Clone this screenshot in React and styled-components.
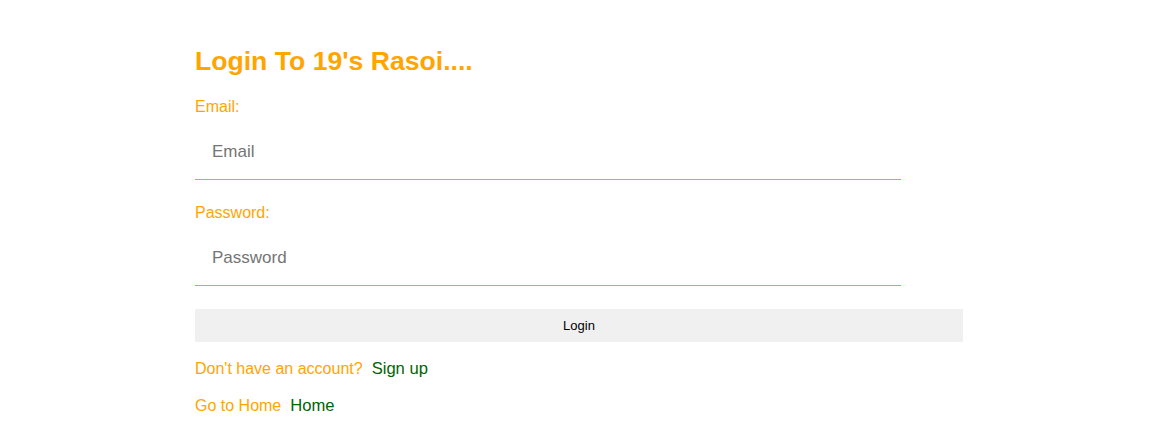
import styled, { createGlobalStyle } from "styled-components";

const GlobalStyle = createGlobalStyle`
  body {
    margin: 0;
    background: #fff;
    font-family: "Liberation Sans", Arial, sans-serif;
  }
`;

const Container = styled.div`
  display: flex;
  flex-direction: column;
  width: 768px;
  padding: 45px 0 0 195px;
`;

const Title = styled.h1`
  margin: 0 0 21px;
  font-size: 26.6px;
  font-weight: 700;
  line-height: 32px;
  color: #ffa500;
`;

const Field = styled.div`
  display: flex;
  flex-direction: column;
  margin-bottom: ${(p) => p.$gap || "24px"};
`;

const Label = styled.label`
  font-size: 16px;
  line-height: 18px;
  color: #ffa500;
  margin-bottom: 9px;
`;

const Input = styled.input`
  width: 706px;
  box-sizing: border-box;
  border: none;
  border-bottom: 1px solid #f0a020;
  outline: none;
  padding: 17px 17px 18px 17px;
  font-family: "Liberation Sans", Arial, sans-serif;
  font-size: 17px;
  line-height: 20px;
  height: 55px;
  color: #333;
  &::placeholder {
    color: #757575;
  }
`;

const Button = styled.button`
  width: 100%;
  height: 33px;
  border: none;
  background: #f0f0f0;
  font-family: "Liberation Sans", Arial, sans-serif;
  font-size: 13px;
  color: #000;
  cursor: pointer;
  margin-bottom: 17px;
`;

const Row = styled.div`
  display: flex;
  align-items: baseline;
  gap: 9px;
  font-size: 16px;
  line-height: 19px;
  margin-bottom: 18px;
`;

const Muted = styled.span`
  color: #ffa500;
`;

const Link = styled.a`
  color: #006400;
  font-size: 16.6px;
  text-decoration: none;
`;

export default function App() {
  return (
    <>
      <GlobalStyle />
      <Container>
        <Title>Login To 19's Rasoi....</Title>
        <Field>
          <Label>Email:</Label>
          <Input type="email" placeholder="Email" />
        </Field>
        <Field $gap="23px">
          <Label>Password:</Label>
          <Input type="password" placeholder="Password" />
        </Field>
        <Button>Login</Button>
        <Row>
          <Muted>Don't have an account?</Muted>
          <Link href="#">Sign up</Link>
        </Row>
        <Row>
          <Muted>Go to Home</Muted>
          <Link href="#">Home</Link>
        </Row>
      </Container>
    </>
  );
}
